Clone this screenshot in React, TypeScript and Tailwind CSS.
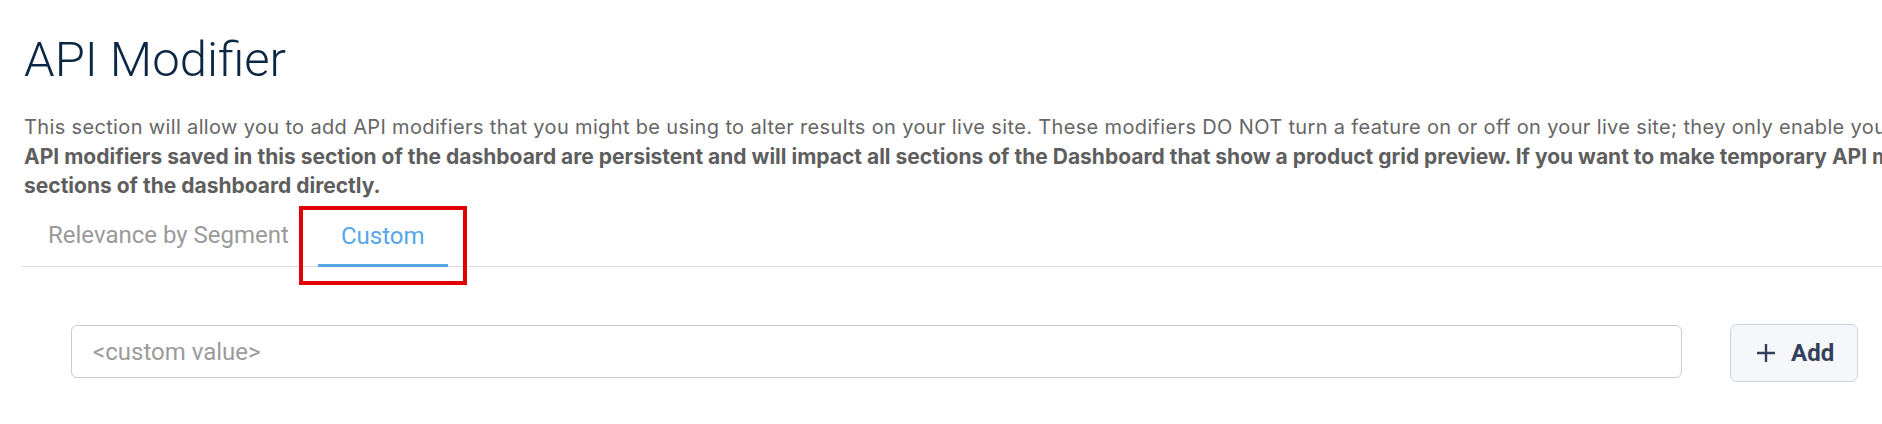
import React from "react";

export default function App() {
  return (
    <div className="w-[1882px] h-[424px] overflow-hidden bg-white pl-[24px]">
      <h1 className="pt-[35px] text-[49px] leading-[50px] font-light text-[#0c2743] [font-family:Roboto,'Liberation_Sans',sans-serif] whitespace-nowrap">
        API Modifier
      </h1>
      <div className="mt-[28px] leading-[29px] text-[#666666] [font-family:Inter,'Liberation_Sans',sans-serif] whitespace-nowrap">
        <p className="text-[20px] tracking-[0.35px]">
          This section will allow you to add API modifiers that you might be using to alter results on your live site. These modifiers DO NOT turn a feature on or off on your live site; they only enable you to preview their effect.
        </p>
        <p className="text-[21px] font-bold text-[#5e5e5e]">
          API modifiers saved in this section of the dashboard are persistent and will impact all sections of the Dashboard that show a product grid preview. If you want to make temporary API modifiers, please use the relevant
          <br />
          sections of the dashboard directly.
        </p>
      </div>
      <div className="mt-[12px] -ml-[2px] flex border-b border-[#dddddd] text-[24px] leading-[28px] [font-family:Roboto,'Liberation_Sans',sans-serif]">
        <button className="px-[26px] pt-[9px] pb-[17px] text-[#9a9a9a] whitespace-nowrap">
          Relevance by Segment
        </button>
        <button className="relative ml-[3px] px-[23px] pt-[9px] pb-[14px] -mb-px border-b-[3px] border-[#55a7ea] text-[#55a7ea] whitespace-nowrap">
          Custom
          <span className="absolute -left-[19px] -right-[19px] -top-[6px] -bottom-[21px] border-[4px] border-[#e00000] pointer-events-none" />
        </button>
      </div>
      <div className="mt-[57px] flex items-start pl-[47px] pr-[24px]">
        <input
          className="mt-px flex-1 h-[53px] rounded-[6px] border border-[#cccccc] bg-white pl-[21px] text-[24px] text-[#333] placeholder:text-[#9b9b9b] outline-none [font-family:Roboto,'Liberation_Sans',sans-serif]"
          placeholder="<custom value>"
        />
        <button className="ml-[48px] flex h-[58px] w-[128px] items-center rounded-[7px] border border-[#c9d4e7] bg-[#f5f7fb] pl-[25px] text-[24px] font-bold text-[#34405a] [font-family:Roboto,'Liberation_Sans',sans-serif]">
          <svg width="20" height="20" viewBox="0 0 20 20" className="mr-[15px]">
            <path d="M10 1v18M1 10h18" stroke="#34405a" strokeWidth="2.4" fill="none" />
          </svg>
          Add
        </button>
      </div>
    </div>
  );
}
